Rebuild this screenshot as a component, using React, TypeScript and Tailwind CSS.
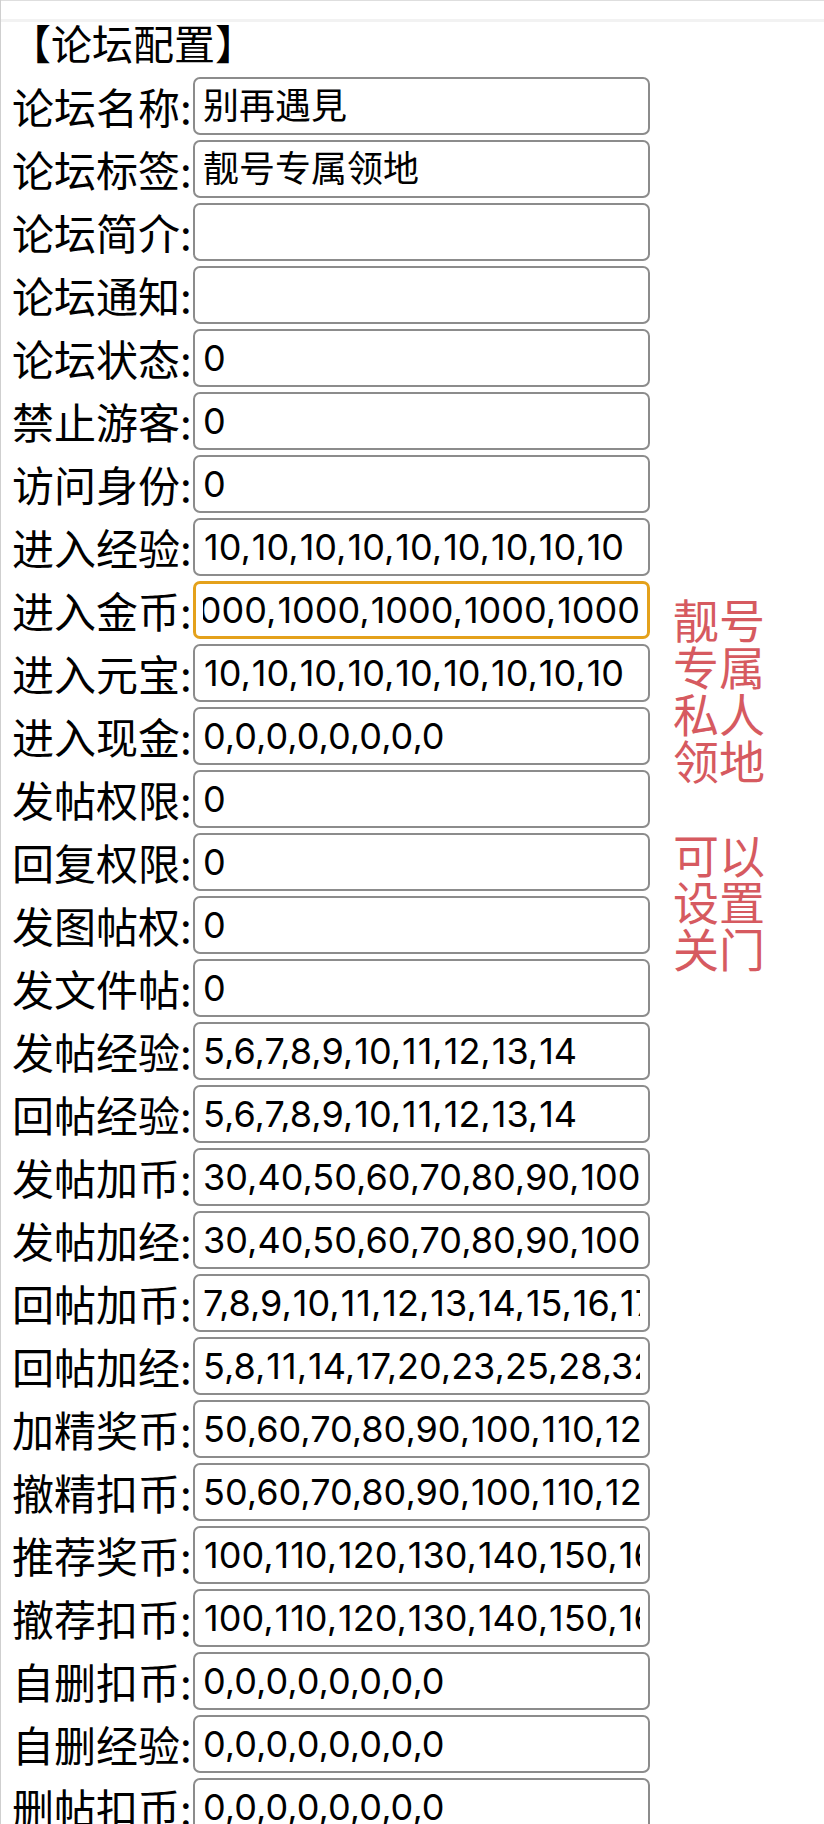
import React from "react";

const fields: { label: string; value: string; focused?: boolean }[] = [
  { label: "论坛名称", value: "别再遇見" },
  { label: "论坛标签", value: "靓号专属领地" },
  { label: "论坛简介", value: "" },
  { label: "论坛通知", value: "" },
  { label: "论坛状态", value: "0" },
  { label: "禁止游客", value: "0" },
  { label: "访问身份", value: "0" },
  { label: "进入经验", value: "10,10,10,10,10,10,10,10,10" },
  { label: "进入金币", value: "1000,1000,1000,1000,1000,1000,1000,1000,1000", focused: true },
  { label: "进入元宝", value: "10,10,10,10,10,10,10,10,10" },
  { label: "进入现金", value: "0,0,0,0,0,0,0,0" },
  { label: "发帖权限", value: "0" },
  { label: "回复权限", value: "0" },
  { label: "发图帖权", value: "0" },
  { label: "发文件帖", value: "0" },
  { label: "发帖经验", value: "5,6,7,8,9,10,11,12,13,14" },
  { label: "回帖经验", value: "5,6,7,8,9,10,11,12,13,14" },
  { label: "发帖加币", value: "30,40,50,60,70,80,90,100" },
  { label: "发帖加经", value: "30,40,50,60,70,80,90,100" },
  { label: "回帖加币", value: "7,8,9,10,11,12,13,14,15,16,17,18" },
  { label: "回帖加经", value: "5,8,11,14,17,20,23,25,28,32" },
  { label: "加精奖币", value: "50,60,70,80,90,100,110,120" },
  { label: "撤精扣币", value: "50,60,70,80,90,100,110,120" },
  { label: "推荐奖币", value: "100,110,120,130,140,150,160" },
  { label: "撤荐扣币", value: "100,110,120,130,140,150,160" },
  { label: "自删扣币", value: "0,0,0,0,0,0,0,0" },
  { label: "自删经验", value: "0,0,0,0,0,0,0,0" },
  { label: "删帖扣币", value: "0,0,0,0,0,0,0,0" },
];

// the device font draws "1" a bit wider than Inter does
const Digits = ({ text }: { text: string }) => (
  <>
    {text.split("").map((ch, i) =>
      ch === "1" ? (
        <span key={i} className="pl-[1px]">
          1
        </span>
      ) : (
        <React.Fragment key={i}>{ch}</React.Fragment>
      )
    )}
  </>
);

const FieldRow = ({ label, value, focused }: { label: string; value: string; focused?: boolean }) => (
  <div className="flex items-center h-[58px]">
    <div className="w-[192px] shrink-0 pl-[11px] text-[42px] leading-none text-black whitespace-nowrap">
      {label}:
    </div>
    <div
      className={
        focused
          ? "w-[457px] h-[58px] shrink-0 rounded-[7px] border-[3px] border-[#e4a11b] bg-white px-[7px] flex items-center"
          : "w-[457px] h-[58px] shrink-0 rounded-[7px] border-2 border-[#8c8c8c] bg-white px-[8px] flex items-center"
      }
    >
      <div
        className={
          focused
            ? "w-full overflow-hidden whitespace-nowrap flex justify-end text-[36px] leading-none text-black"
            : "w-full overflow-hidden whitespace-nowrap text-[36px] leading-none text-black"
        }
        style={{ fontFamily: 'Inter, "Noto Sans CJK SC", sans-serif' }}
      >
        <span className="shrink-0">
          <Digits text={value} />
        </span>
      </div>
    </div>
  </div>
);

export default function App() {
  return (
    <div
      className="min-h-screen bg-white border-l border-[#cfcfcf] overflow-hidden"
      style={{ fontFamily: '"Noto Sans CJK SC", "Noto Sans", sans-serif' }}
    >
      <div className="h-[22px] border-t border-[#dedede] border-b-[3px] border-b-[#f2f2f2]" />
      <div className="flex">
        <div className="w-[650px] shrink-0">
          <div className="h-[55px] pl-[9px] text-[41px] leading-none text-black">
            【论坛配置】
          </div>
          <div className="flex flex-col gap-[5px]">
            {fields.map((f, i) => (
              <FieldRow key={i} label={f.label} value={f.value} focused={f.focused} />
            ))}
          </div>
        </div>
        <div className="pl-[22px] pt-[573px] w-[130px] text-[46px] leading-[47px] text-[#d65a60]">
          <div>靓号</div>
          <div>专属</div>
          <div>私人</div>
          <div>领地</div>
          <div className="h-[47px]" />
          <div>可以</div>
          <div>设置</div>
          <div>关门</div>
        </div>
      </div>
    </div>
  );
}
